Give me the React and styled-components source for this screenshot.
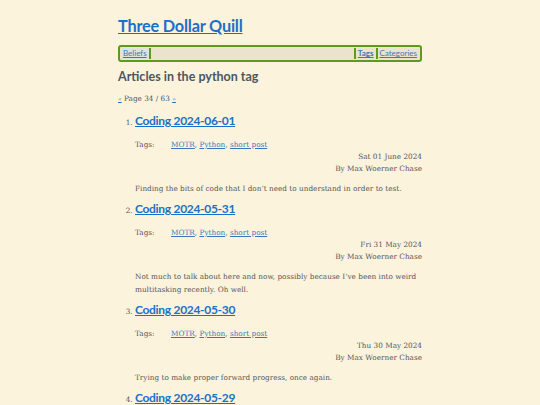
import React from "react";
import styled, { createGlobalStyle } from "styled-components";

const posts = [
  {
    title: "Coding 2024-06-01",
    date: "Sat 01 June 2024",
    summary: "Finding the bits of code that I don\u2019t need to understand in order to test.",
  },
  {
    title: "Coding 2024-05-31",
    date: "Fri 31 May 2024",
    summary:
      "Not much to talk about here and now, possibly because I\u2019ve been into weird multitasking recently. Oh well.",
  },
  {
    title: "Coding 2024-05-30",
    date: "Thu 30 May 2024",
    summary: "Trying to make proper forward progress, once again.",
  },
  {
    title: "Coding 2024-05-29",
    date: "Wed 29 May 2024",
    summary: "More coding.",
  },
];

function App() {
  return (
    <>
      <GlobalStyle />
      <Page>
        <SiteTitle>
          <a href="#">Three Dollar Quill</a>
        </SiteTitle>
        <Nav>
          <NavItem $current $sep="right">
            <a href="#">Beliefs</a>
          </NavItem>
          <NavSpacer />
          <NavItem $sep="left" $bold>
            <a href="#">Tags</a>
          </NavItem>
          <NavItem $sep="left">
            <a href="#">Categories</a>
          </NavItem>
        </Nav>
        <Heading>Articles in the python tag</Heading>
        <Pager>
          <a href="#">«</a> Page 34 / 63 <a href="#">»</a>
        </Pager>
        <PostList>
          {posts.map((post) => (
            <Post key={post.title}>
              <PostTitle>
                <a href="#">{post.title}</a>
              </PostTitle>
              <TagRow>
                <TagLabel>Tags:</TagLabel>
                <span>
                  <a href="#">MOTR</a>, <a href="#">Python</a>,{" "}
                  <a href="#">short post</a>
                </span>
              </TagRow>
              <Meta>
                <div>{post.date}</div>
                <div>By Max Woerner Chase</div>
              </Meta>
              <Summary>{post.summary}</Summary>
            </Post>
          ))}
        </PostList>
      </Page>
    </>
  );
}

export default App;

const GlobalStyle = createGlobalStyle`
  html, body {
    margin: 0;
    padding: 0;
    background: #fcf3dc;
  }
  body {
    font-family: "DejaVu Serif", "Liberation Serif", serif;
    color: #555;
  }
  a {
    color: #1f6fbf;
  }
`;

const Page = styled.div`
  width: 304px;
  margin: 0 auto;
  padding-top: 15px;
`;

const SiteTitle = styled.h1`
  margin: 0 0 8px;
  font-family: Lato, "Noto Sans", sans-serif;
  font-size: 16.3px;
  line-height: 22px;
  font-weight: 700;
  letter-spacing: -0.2px;
  a {
    color: #1a70c8;
  }
`;

const Nav = styled.div`
  display: flex;
  align-items: stretch;
  height: 11px;
  padding: 1px 1px;
  border: 2px solid #5f9a1e;
  border-radius: 3px;
  background: #ece3cc;
  font-family: Lato, "Noto Sans", sans-serif;
  font-size: 8px;
  line-height: 11px;
`;

const NavItem = styled.div`
  padding: 0 2px;
  background: ${(p) => (p.$current ? "#dfe3dc" : "transparent")};
  border-${(p) => p.$sep}: 2px solid #5f9a1e;
  font-weight: ${(p) => (p.$bold ? 700 : 400)};
  a {
    color: #3b78b8;
  }
`;

const NavSpacer = styled.div`
  flex: 1;
`;

const Heading = styled.h2`
  margin: 7px 0 0;
  font-family: Lato, "Noto Sans", sans-serif;
  font-size: 12.5px;
  line-height: 16px;
  font-weight: 700;
  color: #4b5760;
`;

const Pager = styled.p`
  margin: 9px 0 0;
  font-size: 7.3px;
  line-height: 10px;
  color: #555;
  a {
    font-size: 6px;
  }
`;

const PostList = styled.ol`
  margin: 8px 0 0;
  padding-left: 17px;
  font-size: 7.3px;
  line-height: 12px;
`;

const Post = styled.li`
  margin-bottom: 5px;
  &::marker {
    color: #555;
  }
`;

const PostTitle = styled.h3`
  margin: 0;
  font-family: Lato, "Noto Sans", sans-serif;
  font-size: 12px;
  line-height: 18px;
  font-weight: 700;
  letter-spacing: -0.3px;
  a {
    color: #1a70c8;
  }
`;

const TagRow = styled.div`
  display: flex;
  margin-top: 9px;
  font-size: 7.3px;
  line-height: 12px;
  a {
    color: #3a78b8;
  }
`;

const TagLabel = styled.span`
  width: 36px;
`;

const Meta = styled.div`
  text-align: right;
  font-size: 7.3px;
  line-height: 12px;
`;

const Summary = styled.p`
  margin: 7px 0 0;
  font-size: 7.3px;
  line-height: 13px;
`;
